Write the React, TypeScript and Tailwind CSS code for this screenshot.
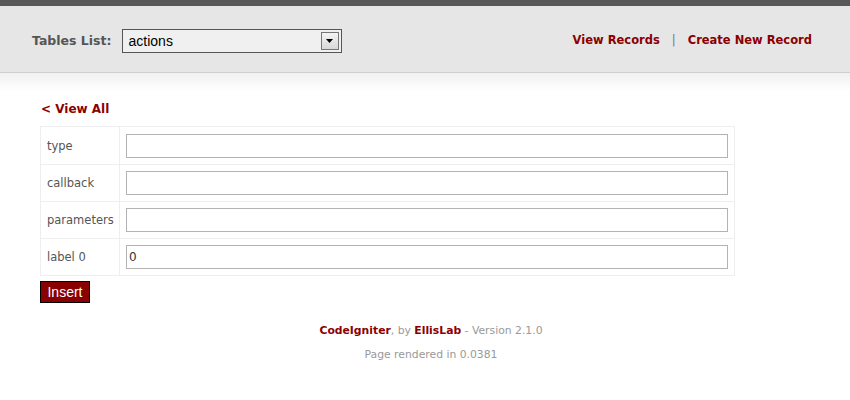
import React from "react";

const V = { fontFamily: '"DejaVu Sans", Verdana, sans-serif' };

export default function App() {
  const rows = [
    { label: "type", value: "" },
    { label: "callback", value: "" },
    { label: "parameters", value: "" },
    { label: "label 0", value: "0" },
  ];
  return (
    <div className="w-[850px] h-[400px] bg-white overflow-hidden" style={V}>
      <div className="h-[6px] bg-[#585858]" />
      <div className="h-[67px] bg-[#e6e6e6] border-b border-[#cfcfcf] flex items-center justify-between pl-[32px] pr-[38px] pt-[4px]">
        <div className="flex items-center">
          <span className="text-[12.5px] font-bold text-[#555]">Tables List:</span>
          <div className="ml-[10px] w-[220px] h-[24px] border border-[#555] bg-[#f0f0f0] flex items-center justify-between pl-[6px] pr-[2px]">
            <span className="text-[14px] text-black" style={{ fontFamily: '"Liberation Sans", Arial, sans-serif' }}>actions</span>
            <div className="w-[18px] h-[18px] border border-[#777] bg-gradient-to-b from-[#f4f4f4] to-[#d8d8d8] flex items-center justify-center">
              <svg width="7" height="4" viewBox="0 0 7 4"><path d="M0 0h7L3.5 4z" fill="#000" /></svg>
            </div>
          </div>
        </div>
        <div className="flex items-center text-[11.5px] font-bold text-[#8b0000]">
          <span>View Records</span>
          <span className="mx-[12px] font-normal text-[#777]">|</span>
          <span>Create New Record</span>
        </div>
      </div>
      <div className="h-[18px] bg-gradient-to-b from-[#f0f0f0] to-white" />
      <div className="ml-[40px] w-[782px]">
        <div className="text-[12px] font-bold text-[#8b0000] ml-[1px] mt-[11px] leading-[15px]">&lt; View All</div>
        <div className="mt-[9px] w-[695px] border border-[#eeeeee]">
          {rows.map((r, i) => (
            <div key={r.label} className={`flex h-[37px] ${i > 0 ? "border-t border-[#eeeeee]" : ""}`}>
              <div className="w-[79px] border-r border-[#eeeeee] flex items-center pl-[6px] pt-[2px] text-[11.5px] text-[#555]">{r.label}</div>
              <div className="flex-1 flex items-center pl-[6px] pr-[6px]">
                <div className="w-full h-[24px] border border-[#b3b3b3] bg-white flex items-center pl-[2px] text-[12px] text-[#333]">{r.value}</div>
              </div>
            </div>
          ))}
        </div>
        <div className="mt-[5px] w-[50px] h-[22px] bg-[#880000] border border-black text-white text-[14px] flex items-center justify-center" style={{ fontFamily: '"Liberation Sans", Arial, sans-serif' }}>Insert</div>
        <div className="mt-[21px] text-center text-[10.8px] text-[#999] leading-[14px]">
          <span className="font-bold text-[#8b0000]">CodeIgniter</span>, by <span className="font-bold text-[#8b0000]">EllisLab</span> - Version 2.1.0
        </div>
        <div className="mt-[10px] text-center text-[10.8px] text-[#999] leading-[14px]">Page rendered in 0.0381</div>
      </div>
    </div>
  );
}
